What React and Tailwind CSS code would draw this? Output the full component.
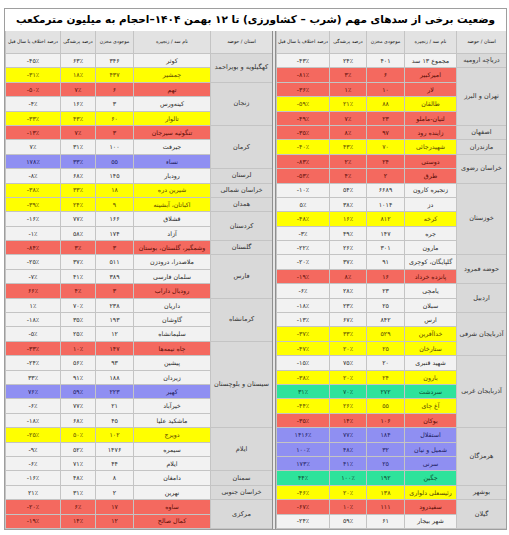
import React from 'react';

const tone = {
  w: 'bg-[#f2f2f2] text-[#2b2b2b]',
  r: 'bg-[#f4695f] text-[#5a0c06]',
  y: 'bg-[#ffff00] text-[#5a4800]',
  b: 'bg-[#8f8ff2] text-[#1c1c5e]',
  g: 'bg-[#2ee39b] text-[#0c4a2e]',
};

const rightGroups = [
  { p: 'دریاچه ارومیه', rows: [['مجموع ۱۳ سد', '۴۰۱', '۲۴٪', '-۴۳٪', 'w']] },
  {
    p: 'تهران و البرز',
    rows: [
      ['امیرکبیر', '۶', '۳٪', '-۸۱٪', 'r'],
      ['لار', '۱۰', '۱٪', '-۳۶٪', 'r'],
      ['طالقان', '۸۸', '۲۱٪', '-۵۹٪', 'y'],
      ['لتیان-ماملو', '۲۳', '۷٪', '-۴۹٪', 'r'],
    ],
  },
  { p: 'اصفهان', rows: [['زاینده رود', '۹۷', '۸٪', '-۳۵٪', 'r']] },
  { p: 'مازندران', rows: [['شهیدرجائی', '۷۰', '۴۳٪', '-۴۰٪', 'y']] },
  {
    p: 'خراسان رضوی',
    rows: [
      ['دوستی', '۲۴', '۲٪', '-۸۳٪', 'r'],
      ['طرق', '۲', '۴٪', '-۵۳٪', 'r'],
    ],
  },
  {
    p: 'خوزستان',
    rows: [
      ['زنجیره کارون', '۶۶۸۹', '۵۴٪', '-۱۰٪', 'w'],
      ['دز', '۱۰۱۴', '۳۸٪', '۵٪', 'w'],
      ['کرخه', '۸۱۲', '۱۶٪', '-۴۸٪', 'y'],
      ['جره', '۱۴۷', '۴۹٪', '-۳٪', 'w'],
      ['مارون', '۳۰۱', '۲۶٪', '-۲۲٪', 'w'],
    ],
  },
  {
    p: 'حوضه قمرود',
    rows: [
      ['گلپایگان، کوچری', '۹۱', '۳۷٪', '-۲۰٪', 'w'],
      ['پانزده خرداد', '۱۶', '۸٪', '-۱۹٪', 'r'],
    ],
  },
  {
    p: 'اردبیل',
    rows: [
      ['یامچی', '۲۳', '۲۸٪', '-۶٪', 'w'],
      ['سبلان', '۲۵', '۲۳٪', '-۱۸٪', 'w'],
    ],
  },
  {
    p: 'آذربایجان شرقی',
    rows: [
      ['ارس', '۸۴۲', '۶۷٪', '-۱۳٪', 'w'],
      ['خداآفرین', '۵۲۹', '۳۳٪', '-۳۷٪', 'y'],
      ['ستارخان', '۲۵', '۲۰٪', '-۴۷٪', 'y'],
    ],
  },
  {
    p: 'آذربایجان غربی',
    rows: [
      ['شهید قنبری', '۲۰', '۷۵٪', '-۱۵٪', 'w'],
      ['بارون', '۲۴', '۲۰٪', '-۳۸٪', 'y'],
      ['سردشت', '۲۷۲', '۷۰٪', '۳۱٪', 'g'],
      ['آغ چای', '۵۵', '۲۶٪', '-۴۴٪', 'y'],
      ['بوکان', '۱۰۶', '۱۴٪', '-۳۵٪', 'r'],
    ],
  },
  {
    p: 'هرمزگان',
    rows: [
      ['استقلال', '۱۸۴', '۷۷٪', '۱۴۱۶٪', 'b'],
      ['شمیل و نیان', '۳۲', '۴۸٪', '۱۰۰٪', 'b'],
      ['سرنی', '۲۵', '۴۱٪', '۱۷۳٪', 'b'],
      ['جگین', '۱۹۲', '۱۰۰٪', '۴۴٪', 'g'],
    ],
  },
  { p: 'بوشهر', rows: [['رئیسعلی دلواری', '۱۳۸', '۲۰٪', '-۴۶٪', 'y']] },
  {
    p: 'گیلان',
    rows: [
      ['سفیدرود', '۱۱۱', '۱۰٪', '-۶۷٪', 'r'],
      ['شهر بیجار', '۶۱', '۵۹٪', '-۲۴٪', 'w'],
    ],
  },
];

const leftGroups = [
  {
    p: 'کهگیلویه و بویراحمد',
    rows: [
      ['کوثر', '۳۴۶', '۶۳٪', '-۴۵٪', 'w'],
      ['چمشیر', '۴۳۷', '۱۸٪', '-۳۱٪', 'y'],
    ],
  },
  {
    p: 'زنجان',
    rows: [
      ['تهم', '۶', '۷٪', '-۵۰٪', 'r'],
      ['کینه‌ورس', '۳', '۱۶٪', '-۴٪', 'w'],
      ['تالوار', '۶۰', '۴۳٪', '-۳۳٪', 'y'],
    ],
  },
  {
    p: 'کرمان',
    rows: [
      ['تنگوئیه سیرجان', '۳', '۷٪', '-۱۳٪', 'r'],
      ['جیرفت', '۱۰۰', '۳۱٪', '۷٪', 'w'],
      ['نساء', '۵۵', '۳۳٪', '۱۷۸٪', 'b'],
    ],
  },
  { p: 'لرستان', rows: [['رودبار', '۱۴۵', '۶۸٪', '-۸٪', 'w']] },
  { p: 'خراسان شمالی', rows: [['شیرین دره', '۱۸', '۳۳٪', '-۳۸٪', 'y']] },
  { p: 'همدان', rows: [['اکباتان، آبشینه', '۹', '۲۴٪', '-۳۹٪', 'y']] },
  {
    p: 'کردستان',
    rows: [
      ['قشلاق', '۱۶۶', '۷۷٪', '-۱۶٪', 'w'],
      ['آزاد', '۱۷۴', '۵۸٪', '-۱٪', 'w'],
    ],
  },
  { p: 'گلستان', rows: [['وشمگیر، گلستان، بوستان', '۳', '۳٪', '-۸۴٪', 'r']] },
  {
    p: 'فارس',
    rows: [
      ['ملاصدرا، درودزن', '۵۱۱', '۳۷٪', '-۲۵٪', 'w'],
      ['سلمان فارسی', '۳۸۹', '۴۱٪', '-۷٪', 'w'],
      ['رودبال داراب', '۳', '۴٪', '۶۶٪', 'r'],
    ],
  },
  {
    p: 'کرمانشاه',
    rows: [
      ['داریان', '۲۳۸', '۷۰٪', '۱٪', 'w'],
      ['گاوشان', '۱۹۳', '۳۵٪', '-۱۸٪', 'w'],
      ['سلیمانشاه', '۱۲', '۲۵٪', '-۵٪', 'w'],
    ],
  },
  {
    p: 'سیستان و بلوچستان',
    rows: [
      ['چاه نیمه‌ها', '۱۴۷', '۱۰٪', '-۳۳٪', 'r'],
      ['پیشین', '۹۳', '۵۶٪', '-۲۴٪', 'w'],
      ['زیردان', '۱۸۸', '۹۱٪', '۳۳٪', 'w'],
      ['کهیر', '۲۲۳', '۵۹٪', '۷۶٪', 'b'],
      ['خیرآباد', '۲۱', '۷۷٪', '-۶٪', 'w'],
      ['ماشکید علیا', '۴۵', '۶۸٪', '-۱۸٪', 'w'],
    ],
  },
  {
    p: 'ایلام',
    rows: [
      ['دویرج', '۱۰۲', '۵۰٪', '-۲۵٪', 'y'],
      ['سیمره', '۱۴۷۶', '۵۲٪', '-۹٪', 'w'],
      ['ایلام', '۴۴', '۷۱٪', '-۶٪', 'w'],
    ],
  },
  { p: 'سمنان', rows: [['دامغان', '۸', '۴۸٪', '-۱۶٪', 'w']] },
  { p: 'خراسان جنوبی', rows: [['نهرین', '۲', '۳۱٪', '۲۱٪', 'w']] },
  {
    p: 'مرکزی',
    rows: [
      ['ساوه', '۱۷', '۶٪', '-۲۰٪', 'r'],
      ['کمال صالح', '۱۲', '۱۴٪', '-۱۹٪', 'r'],
    ],
  },
];

const rightCols = ['w-[50px]', 'w-[52px]', 'w-[38px]', 'w-[37px]', 'w-[53px]'];
const leftCols = ['w-[62px]', 'w-[77px]', 'w-[38px]', 'w-[35px]', 'w-[55px]'];

const headers = ['استان / حوضه', 'نام سد / زنجیره', 'موجودی مخزن', 'درصد پرشدگی', 'درصد اختلاف با سال قبل'];

const line = 'border-[#c4c4c4]';

function DamTable({ groups, cols }) {
  return (
    <div className="flex flex-col" dir="rtl">
      <div className="flex h-[23px] bg-[#e2e2e2]">
        {headers.map((h, i) => (
          <div
            key={h}
            className={`${cols[i]} shrink-0 flex items-center justify-center whitespace-nowrap overflow-hidden border-l border-b ${line} text-[4.8px] text-[#111]`}
          >
            {h}
          </div>
        ))}
      </div>
      {groups.map((g) => (
        <div key={g.p} className="flex">
          <div
            className={`${cols[0]} shrink-0 flex items-center justify-center text-center leading-[9px] bg-[#d9d9d9] border-l border-b ${line} text-[6.5px] text-[#333]`}
          >
            {g.p}
          </div>
          <div className="flex flex-col">
            {g.rows.map(([name, vol, fill, diff, c]) => (
              <div key={name} className={`flex h-[14.4px] ${tone[c]}`}>
                <div className={`${cols[1]} shrink-0 flex items-center justify-center whitespace-nowrap overflow-hidden border-l border-b ${line} text-[6.3px]`}>
                  {name}
                </div>
                <div className={`${cols[2]} shrink-0 flex items-center justify-center border-l border-b ${line} text-[6.3px]`}>
                  {vol}
                </div>
                <div dir="ltr" className={`${cols[3]} shrink-0 flex items-center justify-center border-l border-b ${line} text-[6.3px]`}>
                  {fill}
                </div>
                <div dir="ltr" className={`${cols[4]} shrink-0 flex items-center justify-center border-l border-b ${line} text-[6.3px]`}>
                  {diff}
                </div>
              </div>
            ))}
          </div>
        </div>
      ))}
    </div>
  );
}

export default function App() {
  return (
    <div
      className="w-[509px] h-[535px] overflow-hidden bg-white pt-[8px] pl-[4px]"
      style={{ fontFamily: '"DejaVu Sans", sans-serif' }}
    >
      <div className="w-[503px] border border-[#9e9e9e]">
        <div dir="rtl" className="h-[22px] flex items-center justify-center whitespace-nowrap text-[10.5px] font-bold text-black">
          وضعیت برخی از سدهای مهم (شرب – کشاورزی) تا ۱۲ بهمن ۱۴۰۴–احجام به میلیون مترمکعب
        </div>
        <div dir="rtl" className="flex">
          <DamTable groups={rightGroups} cols={rightCols} />
          <div className="w-[4px] shrink-0 bg-[#e6e6e6] border-x border-[#8f8f8f]" />
          <DamTable groups={leftGroups} cols={leftCols} />
        </div>
      </div>
    </div>
  );
}
